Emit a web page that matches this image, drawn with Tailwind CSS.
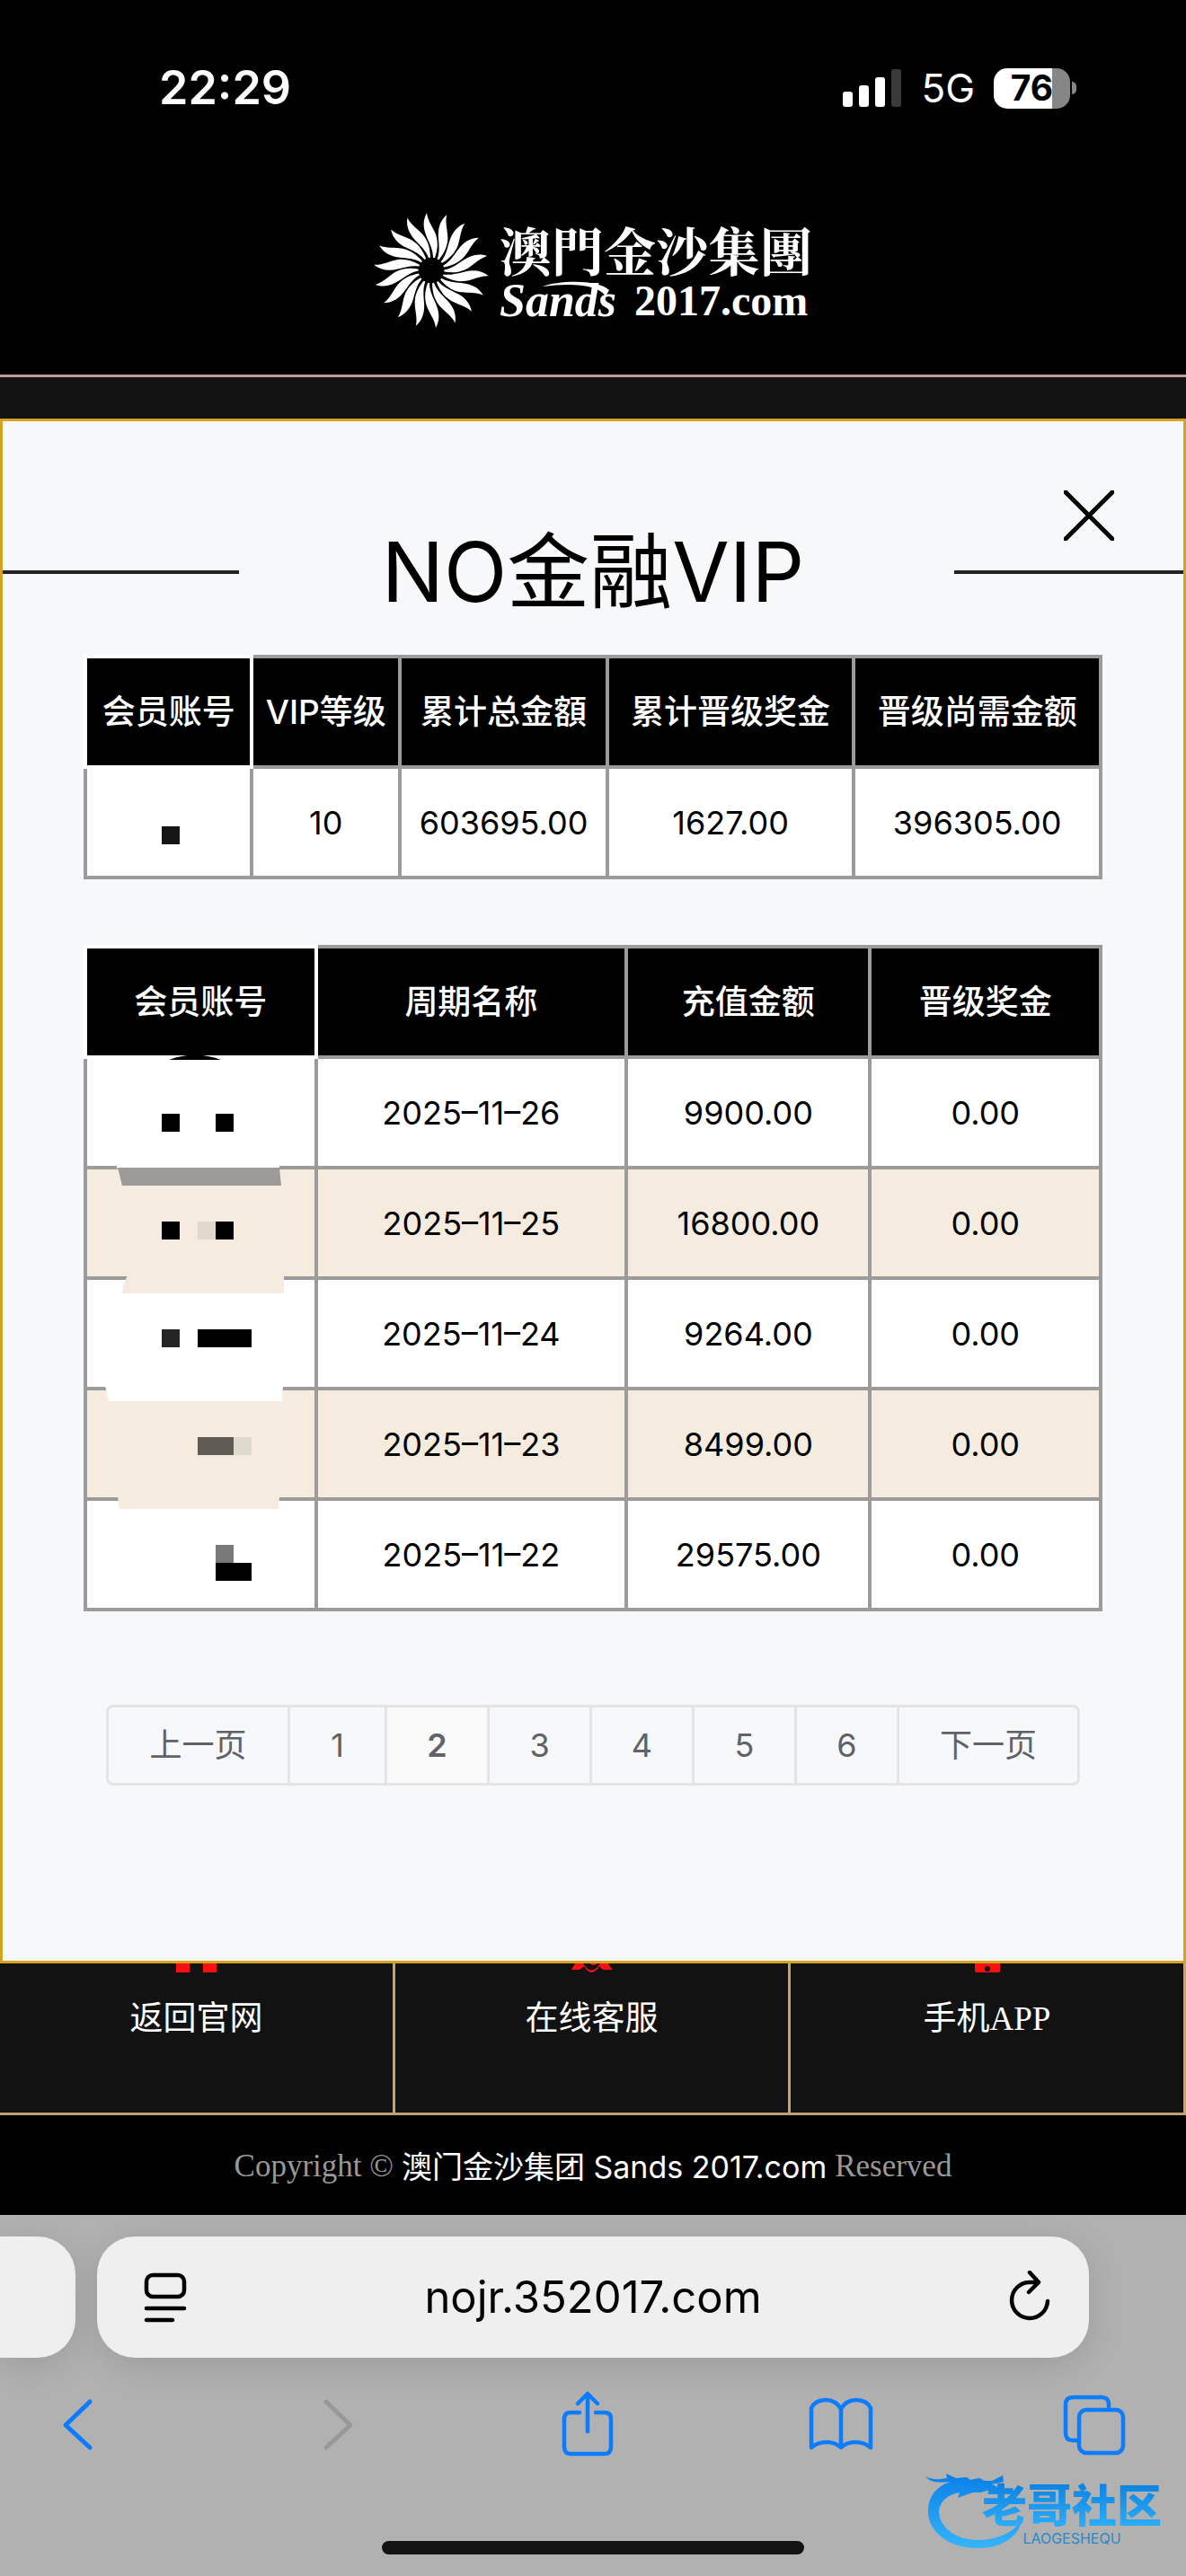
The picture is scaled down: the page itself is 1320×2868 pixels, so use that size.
<!DOCTYPE html>
<html lang="zh-Hans">
<head>
  <meta charset="UTF-8">
  <meta name="viewport" content="width=device-width, initial-scale=1.0">
  <title>NO金融VIP</title>
  <script src="https://cdn.jsdelivr.net/npm/@tailwindcss/browser@4"></script>
</head>
<body class="relative min-h-screen flex flex-col bg-black text-black font-[Inter,'Noto_Sans_CJK_SC',sans-serif]">

  <!-- 状态栏 -->
  <div class="h-[196px] pl-[177px] pr-[122px] flex items-center justify-between text-white">
    <span class="text-[52px] font-semibold">22:29</span>
    <div class="flex items-center gap-[21px]">
      <svg class="w-[66px] h-[44px]" viewBox="0 0 66 44" fill="#fff">
        <rect x="0" y="26" width="11" height="17" rx="3"/>
        <rect x="18" y="19" width="11" height="24" rx="3"/>
        <rect x="36" y="10" width="11" height="33" rx="3"/>
        <rect x="54" y="1" width="11" height="42" rx="3" fill="#3a3a3a"/>
      </svg>
      <span class="text-[44px]">5G</span>
      <div class="flex items-center gap-[2px]">
        <div class="w-[85px] h-[45px] rounded-[15px] bg-linear-to-r from-white from-76% to-[#868686] to-76% flex items-center justify-center text-black text-[39px] font-bold">76</div>
        <div class="w-[5px] h-[14px] rounded-r-full bg-[#868686]"></div>
      </div>
    </div>
  </div>

  <!-- 网站头部 -->
  <header class="pt-[41px] pb-[52px] border-b-3 border-[#c09a98] flex justify-center">
    <a href="#" class="flex gap-3 text-white">
      <svg class="size-[128px]" viewBox="-64 -64 128 128" fill="#fff">
        <defs>
          <path id="ray" d="M-5 -64C-10 -55 -9 -46 -5 -37C-2 -30 2 -23 2 -14L4 -14C7 -23 8 -31 5 -40C2 -48 -4 -55 -5 -64Z"/>
        </defs>
        <g id="sun"></g>
      </svg>
      <span class="flex flex-col pt-1">
        <span class="text-[58px] leading-[72px] font-bold font-['Noto_Serif_CJK_TC','Noto_Sans_CJK_TC',serif]">澳門金沙集團</span>
        <span class="flex items-end gap-5 leading-[44px] font-['Liberation_Serif',serif] font-bold">
          <span class="relative text-[52px] italic">Sands
            <svg class="absolute left-[48px] top-0 w-[76px] h-[20px]" viewBox="0 0 76 20" fill="#fff"><path d="M0 6C18 -1 62 -2 74 10L70 17C64 5 34 1 0 6Z"/></svg>
          </span>
          <span class="text-[48px]">2017.com</span>
        </span>
      </span>
    </a>
  </header>
  <div class="h-[46px] bg-[#121212]"></div>

  <!-- VIP 弹窗 -->
  <section class="relative border-3 border-[#d4a321] bg-[#f7f8fa] pt-[104px] pb-[195px]">
    <button class="absolute top-[77px] right-[77px]" aria-label="关闭">
      <svg class="size-[56px]" viewBox="0 0 56 56" fill="none" stroke="#000" stroke-width="5" stroke-linecap="round"><path d="M2 2L54 54M54 2L2 54"/></svg>
    </button>
    <div class="flex items-center">
      <div class="w-1/5 h-[4px] bg-[#222]"></div>
      <h1 class="flex-1 text-center text-[92px] leading-[128px]">NO金融VIP</h1>
      <div class="w-1/5 pl-2"><div class="h-[4px] bg-[#222]"></div></div>
    </div>

    <div class="relative mt-[28px] mx-[90px]">
      <table class="w-full table-fixed border-collapse text-center text-[36px]">
        <colgroup>
          <col class="w-[16.400%]"><col class="w-[14.600%]"><col class="w-[20.400%]"><col class="w-[24.300%]"><col class="w-[24.300%]">
        </colgroup>
        <thead>
          <tr class="h-[123px] bg-black text-white text-[37px]">
            <th class="border-4 border-white font-medium">会员账号</th>
            <th class="border-4 border-[#9c9b9a] font-medium whitespace-nowrap">VIP等级</th>
            <th class="border-4 border-[#9c9b9a] font-medium">累计总金額</th>
            <th class="border-4 border-[#9c9b9a] font-medium">累计晋级奖金</th>
            <th class="border-4 border-[#9c9b9a] font-medium">晋级尚需金额</th>
          </tr>
        </thead>
        <tbody>
          <tr class="h-[123px] bg-white">
            <td class="border-4 border-[#9c9b9a]"></td>
            <td class="border-4 border-[#9c9b9a]">10</td>
            <td class="border-4 border-[#9c9b9a]">603695.00</td>
            <td class="border-4 border-[#9c9b9a]">1627.00</td>
            <td class="border-4 border-[#9c9b9a]">396305.00</td>
          </tr>
        </tbody>
      </table>
      <!-- 账号打码 -->
      <svg class="absolute left-0 top-0 w-[186px] h-[248px]" viewBox="0 0 186 248"><rect x="87" y="191" width="20" height="20" fill="#161616"/></svg>
    </div>

    <div class="relative mt-[73px] mx-[90px]">
      <table class="w-full table-fixed border-collapse text-center text-[36px]">
        <colgroup>
          <col class="w-[22.700%]"><col class="w-[30.600%]"><col class="w-[24%]"><col class="w-[22.700%]">
        </colgroup>
        <thead>
          <tr class="h-[123px] bg-black text-white text-[37px]">
            <th class="border-4 border-white font-medium">会员账号</th>
            <th class="border-4 border-[#9c9b9a] font-medium">周期名称</th>
            <th class="border-4 border-[#9c9b9a] font-medium">充值金额</th>
            <th class="border-4 border-[#9c9b9a] font-medium">晋级奖金</th>
          </tr>
        </thead>
        <tbody>
          <tr class="h-[123px] bg-white">
            <td class="border-4 border-[#9c9b9a]"></td>
            <td class="border-4 border-[#9c9b9a]">2025–11–26</td>
            <td class="border-4 border-[#9c9b9a]">9900.00</td>
            <td class="border-4 border-[#9c9b9a]">0.00</td>
          </tr>
          <tr class="h-[123px] bg-[#f5ecdf]">
            <td class="border-4 border-[#9c9b9a]"></td>
            <td class="border-4 border-[#9c9b9a]">2025–11–25</td>
            <td class="border-4 border-[#9c9b9a]">16800.00</td>
            <td class="border-4 border-[#9c9b9a]">0.00</td>
          </tr>
          <tr class="h-[123px] bg-white">
            <td class="border-4 border-[#9c9b9a]"></td>
            <td class="border-4 border-[#9c9b9a]">2025–11–24</td>
            <td class="border-4 border-[#9c9b9a]">9264.00</td>
            <td class="border-4 border-[#9c9b9a]">0.00</td>
          </tr>
          <tr class="h-[123px] bg-[#f5ecdf]">
            <td class="border-4 border-[#9c9b9a]"></td>
            <td class="border-4 border-[#9c9b9a]">2025–11–23</td>
            <td class="border-4 border-[#9c9b9a]">8499.00</td>
            <td class="border-4 border-[#9c9b9a]">0.00</td>
          </tr>
          <tr class="h-[123px] bg-white">
            <td class="border-4 border-[#9c9b9a]"></td>
            <td class="border-4 border-[#9c9b9a]">2025–11–22</td>
            <td class="border-4 border-[#9c9b9a]">29575.00</td>
            <td class="border-4 border-[#9c9b9a]">0.00</td>
          </tr>
        </tbody>
      </table>
      <!-- 账号打码 -->
      <svg class="absolute left-0 top-0 w-[256px] h-[740px]" viewBox="0 0 256 740">
        <path d="M95 128Q124 117 153 128Z" fill="#000"/>
        <path d="M37 244H218V249H37Z" fill="#fff"/>
        <path d="M38 248H218L220 268H43Z" fill="#9c9b9a"/>
        <path d="M49 368H223V388H43Q44 377 49 368Z" fill="#f5ecdf"/>
        <path d="M24 491H222L221 508H28Z" fill="#fff"/>
        <path d="M38 614H218L217 628H40Z" fill="#f5ecdf"/>
        <path d="M87 188h20v20h-20zM147 188h20v20h-20zM87 308h20v20h-20zM147 308h20v20h-20zM127 428h60v20h-60zM147 688h40v20h-40z" fill="#000"/>
        <path d="M127 308h20v20h-20zM167 548h20v20h-20z" fill="#e0d9cd"/>
        <path d="M87 428h20v20h-20z" fill="#252525"/>
        <path d="M127 548h40v20h-40z" fill="#605b55"/>
        <path d="M147 668h20v20h-20z" fill="#787878"/>
      </svg>
    </div>

    <nav class="mt-[104px] mx-[115px] h-[90px] flex border-3 border-[#e4e4e5] rounded-[8px] divide-x-3 divide-[#e4e4e5] text-[36px] text-[#606266]" aria-label="分页">
      <button class="w-[202px]">上一页</button>
      <button class="w-[108px]">1</button>
      <button class="flex-1 bg-[#fafafa] font-semibold">2</button>
      <button class="flex-1">3</button>
      <button class="flex-1">4</button>
      <button class="flex-1">5</button>
      <button class="flex-1">6</button>
      <button class="w-[198px]">下一页</button>
    </nav>
  </section>

  <!-- 底部导航 -->
  <nav class="grid grid-cols-3 bg-[#121212] border-b-3 border-[#c0a070] text-white text-[37px] leading-[56px] font-['Liberation_Serif','Noto_Sans_CJK_SC',serif]">
    <a href="#" class="flex flex-col items-center gap-6 pb-[76px] border-r-3 border-[#c9a35f]">
      <svg class="w-[48px] h-[10px]" viewBox="0 0 48 10" fill="#fb1010"><path d="M1 0h15v10h-15zM31 0h15v10h-15z"/></svg>
      返回官网
    </a>
    <a href="#" class="flex flex-col items-center gap-6 pb-[76px] border-r-3 border-[#c9a35f]">
      <svg class="w-[46px] h-[10px]" viewBox="0 0 46 10" fill="#fb1010"><path d="M4 0L0 7H9Q12 5 14 3Q22 17 31 3Q34 7 37 7H46Q43 5 41 0H32Q22 15 13 0ZM20 0Q25 4 29 0Z"/></svg>
      在线客服
    </a>
    <a href="#" class="flex flex-col items-center gap-6 pb-[76px] border-r-3 border-[#c9a35f]">
      <svg class="w-[30px] h-[10px]" viewBox="0 0 30 10" fill="#fb1010"><path d="M1 0H29V8Q29 10 27 10H3Q1 10 1 8Z"/><circle cx="15" cy="6" r="3" fill="#121212"/></svg>
      手机APP
    </a>
  </nav>
  <footer class="h-[111px] pt-[3px] flex items-center justify-center gap-[9px] text-[35px] text-[#999] font-['Liberation_Serif',serif]">
    <span>Copyright ©</span>
    <a href="#" class="text-white text-[34px] font-[Inter,'Noto_Sans_CJK_SC',sans-serif]">澳门金沙集团 Sands 2017.com</a>
    <span>Reserved</span>
  </footer>

  <!-- 浏览器工具栏 -->
  <div class="flex-1 bg-[#b1b1b1] pt-6 pb-6 overflow-hidden">
    <div class="flex gap-6 h-[135px] pr-[108px]">
      <div class="w-[84px] rounded-r-[42px] bg-[#efefef] shadow-[0_8px_40px_rgba(0,0,0,0.12)]"></div>
      <div class="flex-1 rounded-[42px] bg-[#efefef] shadow-[0_8px_40px_rgba(0,0,0,0.12)] flex items-center justify-between px-[36px]">
        <button aria-label="页面菜单">
          <svg class="w-[80px] h-[60px]" viewBox="0 0 80 60" fill="none" stroke="#000" stroke-width="4.500" stroke-linecap="round"><rect x="19" y="5" width="42" height="24" rx="7"/><path d="M19 42H61M19 55H48"/></svg>
        </button>
        <input type="text" class="flex-1 min-w-0 text-center text-[49px] text-black bg-transparent" value="nojr.352017.com" aria-label="网址">
        <button aria-label="刷新">
          <svg class="w-[80px] h-[60px]" viewBox="0 0 80 60" fill="none" stroke="#000" stroke-width="4.500" stroke-linecap="round" stroke-linejoin="round"><path d="M70 34A20 20 0 1 1 50 13H60M50 2L60 13L49 24"/></svg>
        </button>
      </div>
    </div>
    <div class="mt-[34px] pl-[53px] pr-[63px] flex justify-between">
      <button aria-label="后退">
        <svg class="size-[80px]" viewBox="0 0 80 80" fill="none" stroke="#0b7bff" stroke-width="5" stroke-linecap="round" stroke-linejoin="round"><path d="M47 15L20 41L47 66"/></svg>
      </button>
      <button aria-label="前进" disabled>
        <svg class="size-[80px]" viewBox="0 0 80 80" fill="none" stroke="#989898" stroke-width="5" stroke-linecap="round" stroke-linejoin="round"><path d="M29 15L56 41L29 66"/></svg>
      </button>
      <button aria-label="分享">
        <svg class="size-[80px]" viewBox="0 0 80 80" fill="none" stroke="#0b7bff" stroke-width="4.500" stroke-linecap="round" stroke-linejoin="round"><path d="M30 27H20Q13 27 13 34V65Q13 73 20 73H58Q65 73 65 65V34Q65 27 58 27H48M39 48V6M28 17L39 6L50 17"/></svg>
      </button>
      <button aria-label="书签">
        <svg class="size-[80px]" viewBox="0 0 80 80" fill="none" stroke="#0b7bff" stroke-width="4.500" stroke-linejoin="round"><path d="M40 23C36 16 29 13 23 13C16 13 10 16 7 22V66C16 58 32 58 40 66C48 58 64 58 73 66V22C70 16 64 13 57 13C51 13 44 16 40 23ZM40 23V66"/></svg>
      </button>
      <button aria-label="标签页">
        <svg class="size-[80px]" viewBox="0 0 80 80" fill="none" stroke="#0b7bff" stroke-width="4.500" stroke-linejoin="round"><path d="M22 58H17Q9 58 9 50V18Q9 10 17 10H49Q57 10 57 18V24"/><rect x="24" y="24" width="49" height="48" rx="8"/></svg>
      </button>
    </div>
    <div class="mt-[90px] mx-auto w-[470px] h-[15px] rounded-full bg-[#141414]"></div>
  </div>

  <!-- 社区水印 -->
  <div class="absolute right-[18px] bottom-[30px] w-[274px] h-[88px]">
    <svg class="absolute left-0 top-0 w-[120px] h-[88px]" viewBox="0 0 120 88">
      <defs><linearGradient id="wm" x1="0" y1="0" x2="0" y2="1"><stop offset="0" stop-color="#0a7fe8"/><stop offset="1" stop-color="#35b4fb"/></linearGradient></defs>
      <path fill="url(#wm)" d="M2 7C10 12 18 10 26 9L25 4L36 9L48 8L52 11L62 9L68 12L76 12L88 6L89 13L76 16L87 21L84 25L74 22L64 25L55 25L46 28L38 31L40 25C28 27 18 34 17 46C17 62 34 78 60 78C82 78 98 70 108 58C107 72 88 87 62 87C30 88 5 70 5 46C5 30 14 18 30 13C18 14 8 15 2 7Z"/>
    </svg>
    <div class="relative pl-[56px] pt-[12px] flex flex-col items-center">
      <span class="text-[50px] leading-[56px] font-black text-transparent bg-clip-text bg-linear-to-b from-[#0a7fe0] to-[#2fb2fb]">老哥社区</span>
      <span class="text-[16px] leading-[16px] text-[#2f86c8]">LAOGESHEQU</span>
    </div>
  </div>

  <script>
    // 太阳标志：18 道光芒，每 20 度一道
    const sun = document.getElementById("sun");
    for (let i = 0; i < 18; i++) {
      const ray = document.createElementNS("http://www.w3.org/2000/svg", "use");
      ray.setAttribute("href", "#ray");
      ray.setAttribute("transform", `rotate(${i * 20})`);
      sun.appendChild(ray);
    }
  </script>
</body>
</html>
